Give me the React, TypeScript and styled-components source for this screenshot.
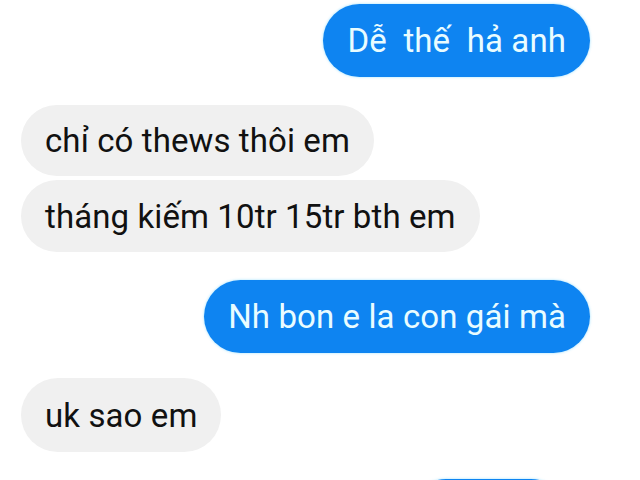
import React from "react";
import styled, { createGlobalStyle } from "styled-components";

const Global = createGlobalStyle`
  html, body { margin: 0; padding: 0; background: #ffffff; }
  body { font-family: Roboto, "Noto Sans", "Liberation Sans", sans-serif; overflow: hidden; }
`;

const Thread = styled.div`
  width: 640px;
  height: 480px;
  overflow: hidden;
  display: flex;
  flex-direction: column;
  padding: 4px 50px 0 21px;
  box-sizing: border-box;
  background: #ffffff;
`;

const Row = styled.div<{ $mine?: boolean; $gap: number; $inset?: number }>`
  display: flex;
  justify-content: ${(p) => (p.$mine ? "flex-end" : "flex-start")};
  margin-top: ${(p) => p.$gap}px;
  padding-right: ${(p) => p.$inset ?? 0}px;
  flex-shrink: 0;
`;

const Bubble = styled.div<{ $mine?: boolean; $h?: number; $w?: number }>`
  height: ${(p) => p.$h ?? 72}px;
  ${(p) => (p.$w ? `width: ${p.$w}px;` : "")}
  border-radius: 37px;
  padding: 0 24px 0 24px;
  display: flex;
  align-items: center;
  box-sizing: border-box;
  white-space: pre;
  font-size: 33px;
  letter-spacing: 0.1px;
  background: ${(p) => (p.$mine ? "#0e84f1" : "#f0f0f0")};
  color: ${(p) => (p.$mine ? "#e9fcff" : "#111111")};
  box-shadow: ${(p) => (p.$mine ? "0 0 2px 1px rgba(150, 225, 255, 0.45)" : "none")};
`;

export default function App() {
  return (
    <>
      <Global />
      <Thread>
        <Row $mine $gap={0}>
          <Bubble $mine $h={73}>Dễ  thế  hả anh</Bubble>
        </Row>
        <Row $gap={28}>
          <Bubble $h={71}>chỉ có thews thôi em</Bubble>
        </Row>
        <Row $gap={4}>
          <Bubble $h={72}>tháng kiếm 10tr 15tr bth em</Bubble>
        </Row>
        <Row $mine $gap={28}>
          <Bubble $mine $h={73}>Nh bon e la con gái mà</Bubble>
        </Row>
        <Row $gap={25}>
          <Bubble $h={74}>uk sao em</Bubble>
        </Row>
        <Row $mine $gap={27} $inset={23}>
          <Bubble $mine $h={72} $w={157} />
        </Row>
      </Thread>
    </>
  );
}
